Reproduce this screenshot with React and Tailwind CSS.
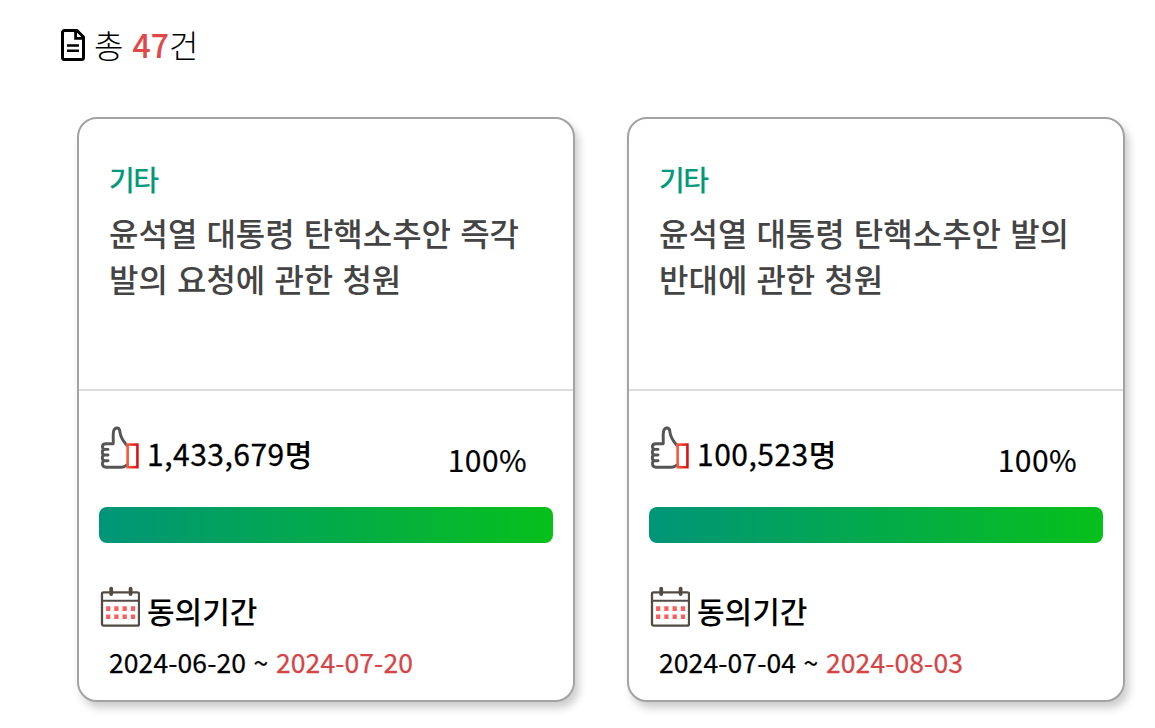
const petitions = [
  {
    category: '기타',
    title: ['윤석열 대통령 탄핵소추안 즉각', '발의 요청에 관한 청원'],
    count: '1,433,679',
    start: '2024-06-20',
    end: '2024-07-20',
  },
  {
    category: '기타',
    title: ['윤석열 대통령 탄핵소추안 발의', '반대에 관한 청원'],
    count: '100,523',
    start: '2024-07-04',
    end: '2024-08-03',
  },
];

function DocumentIcon() {
  return (
    <svg className="h-8 w-6 shrink-0" viewBox="0 0 24 32" fill="none" stroke="#000" strokeWidth="3">
      <path d="M3.5 1.5H16L22.5 8V28.5a2 2 0 0 1-2 2h-17a2 2 0 0 1-2-2V3.5a2 2 0 0 1 2-2Z" strokeLinejoin="round" />
      <path d="M14.6 1.5V9.4H22.5" strokeWidth="2.8" />
      <path d="M6 16.5H18M6 21.8H18" strokeWidth="2.6" />
    </svg>
  );
}

function ThumbIcon() {
  return (
    <svg className="h-[44px] w-10 shrink-0" viewBox="0 0 40 44" fill="none">
      <defs>
        <linearGradient id="cuff" gradientUnits="userSpaceOnUse" x1="28" y1="0" x2="40" y2="0">
          <stop offset="0" stopColor="#fb5a40" />
          <stop offset="1" stopColor="#d40c0c" />
        </linearGradient>
      </defs>
      <path
        d="M27.8 20.3C24.8 16.5 22 13.5 21.2 8.5L20.8 6C20.2 1.8 15.6 2 14.6 6.2C13.6 10.5 14.6 14.5 14.2 18.7H6.8C2.4 18.7 2.4 24.4 6 24.4H9M6 24.4C2.4 24.4 2.4 30 6 30H9M6 30C2.4 30 2.4 35.7 6 35.7H9M6 35.7C2.4 35.7 2.4 42.2 7 42.2H22C25.5 42.2 26.4 41 28 39.8"
        stroke="#555"
        strokeWidth="2.9"
        strokeLinecap="round"
        strokeLinejoin="round"
      />
      <rect x="28.6" y="19.6" width="9.8" height="22.6" stroke="url(#cuff)" strokeWidth="2.6" />
    </svg>
  );
}

function CalendarIcon() {
  return (
    <svg className="h-[41px] w-[41px] shrink-0" viewBox="0 0 41 41" fill="none">
      <rect x="3" y="6.3" width="37" height="33.3" rx="1.5" stroke="#514b43" strokeWidth="2.3" />
      <path d="M2 14.7H40" stroke="#514b43" strokeWidth="2.1" />
      <path d="M12.2 2.6V8M31.6 2.6V8" stroke="#514b43" strokeWidth="3.8" strokeLinecap="round" />
      <path
        d="M7.1 22.6h4.2M15.3 22.6h4.2M23.6 22.6h4.2M31.9 22.6h4.2M7.1 30.7h4.2M15.3 30.7h4.2M23.6 30.7h4.2M31.9 30.7h4.2"
        stroke="#ff5c5c"
        strokeWidth="4.6"
      />
    </svg>
  );
}

function PetitionCard({ item }) {
  return (
    <article className="flex h-[585px] w-[498px] flex-col rounded-[20px] border-2 border-[#a3a3a3] bg-white shadow-[4px_6px_8px_rgba(0,0,0,0.2)]">
      <div className="h-[272px] border-b-2 border-[#dcdcdc] px-[30px] pt-[40px]">
        <p className="text-[28px] leading-[40px] font-medium tracking-[-1.5px] text-[#00997a]">{item.category}</p>
        <h2 className="pt-[10px] text-[32px] leading-[46px] font-medium whitespace-nowrap text-[#444] [word-spacing:1.9px]">
          {item.title.map((line) => (
            <span key={line} className="block">{line}</span>
          ))}
        </h2>
      </div>
      <div className="flex flex-col px-5 pt-[34px]">
        <div className="flex h-[48px] justify-between pr-[26px]">
          <div className="flex gap-2">
            <ThumbIcon />
            <span className="pt-[5px] text-[30px] leading-[46px] font-medium">
              <span className="font-normal tracking-[0.5px] [-webkit-text-stroke:0.3px]">{item.count}</span>명
            </span>
          </div>
          <span className="pt-[11px] text-[30px] leading-[46px] tracking-[0.4px] [-webkit-text-stroke:0.2px]">100%</span>
        </div>
        <div className="mt-[34px] h-9 w-[454px] rounded-lg bg-linear-to-r/srgb from-[#009579] to-[#06c01b]" />
        <div className="mt-[43px] flex h-[50px] gap-[7px]">
          <CalendarIcon />
          <span className="pt-[1px] text-[30px] leading-[46px] font-medium">동의기간</span>
        </div>
        <p className="mt-[6px] pl-[10px] text-[26.5px] leading-[40px] tracking-[0.1px] whitespace-nowrap [-webkit-text-stroke:0.25px] [word-spacing:1.5px]">
          {item.start} ~ <span className="text-[#d64545]">{item.end}</span>
        </p>
      </div>
    </article>
  );
}

export default function App() {
  return (
    <main className="h-[728px] overflow-hidden bg-white font-['Noto_Sans_CJK_KR',sans-serif] text-black">
      <header className="flex h-[117px] gap-[9px] pt-[29px] pl-[61px]">
        <DocumentIcon />
        <p className="-mt-[8px] text-[32px] leading-[46px] font-light [word-spacing:2px]">
          총 <span className="font-medium text-[#e04848]">47</span>건
        </p>
      </header>
      <div className="flex gap-[52px] pl-[77px]">
        {petitions.map((item) => (
          <PetitionCard key={item.start} item={item} />
        ))}
      </div>
    </main>
  );
}
